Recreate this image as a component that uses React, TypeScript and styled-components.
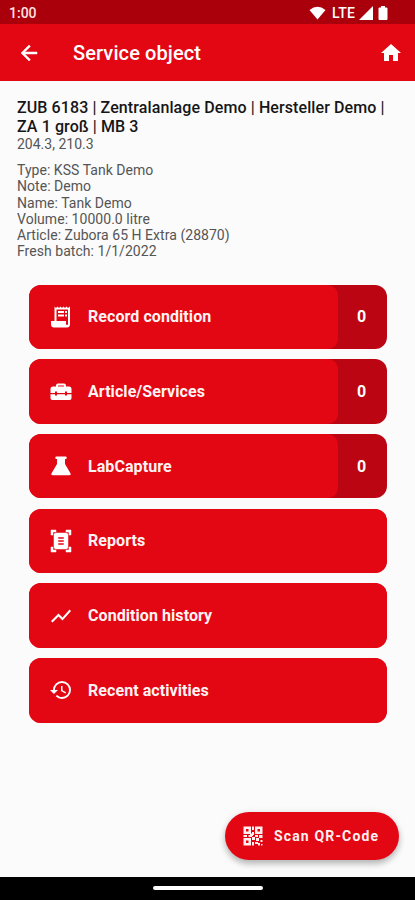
import React from "react";
import styled, { createGlobalStyle } from "styled-components";
import { MdArrowBack, MdHome, MdHistory, MdShowChart, MdDocumentScanner } from "react-icons/md";

const GlobalStyle = createGlobalStyle`
  * { box-sizing: border-box; }
  body { margin: 0; background: #fbfbfb; font-family: Roboto, sans-serif; }
`;

const Screen = styled.div`
  height: 900px;
  display: flex;
  flex-direction: column;
  background: #fbfbfb;
  overflow: hidden;
`;

const StatusBar = styled.div`
  height: 24px;
  flex: none;
  display: flex;
  align-items: center;
  justify-content: space-between;
  padding: 2px 27px 0 9px;
  background: #a9000c;
  color: #fff;
  font-size: 14px;
  font-weight: 500;
`;

const Clock = styled.span`
  color: #ffe3e2;
`;

const Signals = styled.div`
  display: flex;
  align-items: center;
  font-size: 14px;
  letter-spacing: 0.2px;
`;

const Network = styled.span`
  margin: 0 4px 0 6px;
`;

const AppBar = styled.header`
  height: 56.5px;
  flex: none;
  display: flex;
  align-items: center;
  padding: 2px 12px 0 17px;
  background: #e30613;
  color: #fff;
`;

const BoldIcon = styled.span`
  display: flex;
  svg {
    stroke: none;
  }
  path:not([fill="none"]) {
    stroke: currentColor;
    stroke-width: 0.5px;
  }
`;

const Title = styled.h1`
  flex: 1;
  margin: 0 0 0 32px;
  font-size: 20px;
  font-weight: 500;
  letter-spacing: 0.1px;
`;

const Details = styled.section`
  padding: 17px 17px 0;
  color: #555;
  font-size: 14px;
  line-height: 16.2px;
`;

const Heading = styled.h2`
  margin: 0;
  font-size: 16px;
  line-height: 19px;
  font-weight: 500;
  letter-spacing: 0.1px;
  color: #161616;
  white-space: nowrap;
`;

const Positions = styled.div`
  margin-bottom: 10.5px;
`;

const Field = styled.div`
  letter-spacing: 0.04px;
`;

const Menu = styled.nav`
  display: flex;
  flex-direction: column;
  gap: 10.2px;
  padding: 25.2px 28px 0 28.5px;
`;

const MenuButton = styled.div<{ $counted: boolean }>`
  height: 64.5px;
  display: flex;
  border-radius: 12px;
  overflow: hidden;
  background: ${(p) => (p.$counted ? "#bb0512" : "#e30613")};
  color: #fff;
`;

const MenuMain = styled.div`
  flex: 1;
  display: flex;
  align-items: center;
  gap: 15px;
  padding-left: 20.5px;
  border-radius: 0 10px 10px 0;
  background: #e30613;
`;

const MenuLabel = styled.span`
  font-size: 16px;
  font-weight: 700;
  letter-spacing: 0.07px;
  color: #fff3f2;
`;

const Count = styled.span`
  width: 49px;
  display: grid;
  place-items: center;
  padding-right: 2px;
  font-size: 16px;
  font-weight: 700;
`;

const Footer = styled.div`
  margin-top: auto;
  display: flex;
  justify-content: flex-end;
  padding: 0 16px 16.5px;
`;

const ScanButton = styled.div`
  width: 174px;
  height: 48px;
  display: flex;
  align-items: center;
  gap: 9px;
  padding-left: 16px;
  border-radius: 24px;
  background: #e30613;
  box-shadow: 0 4px 6px rgba(0, 0, 0, 0.24), 0 1px 8px rgba(0, 0, 0, 0.08);
  color: #fff0ef;
  font-size: 14px;
  font-weight: 700;
  letter-spacing: 1.15px;
  white-space: nowrap;
`;

const NavigationBar = styled.div`
  height: 23.5px;
  flex: none;
  display: grid;
  place-items: center;
  background: #000;
`;

const HomeHandle = styled.div`
  width: 110px;
  height: 4px;
  border-radius: 2px;
  background: #fff;
`;

const Glyph = styled.svg`
  flex: none;
  display: block;
  fill: currentColor;
`;

const ReceiptIcon = () => (
  <Glyph width="24" height="24" viewBox="0 0 24 24">
    <path fillRule="evenodd" d="M5.500 1.500 7 3l1.500-1.500L10 3l1.500-1.500L13 3l1.500-1.500L16 3l1.500-1.500L19 3l2-1.500V19a3 3 0 0 1-3 3.500H5A3 3 0 0 1 2 19v-3h3.500zM7.500 4.500V16H17v3a1 1 0 0 0 2 0V4.500zM9 6h6v2H9zm7 0h2v2h-2zM9 9.500h6v2H9zm7 0h2v2h-2z" />
  </Glyph>
);

const ToolboxIcon = () => (
  <Glyph width="24" height="24" viewBox="0 0 24 24">
    <path fillRule="evenodd" d="M9 3.500h6a2 2 0 0 1 2 2v1h3a2.500 2.500 0 0 1 2.500 2.500v4H18v-1.500h-2V13H8v-1.500H6V13H1.500V9A2.500 2.500 0 0 1 4 6.500h3v-1a2 2 0 0 1 2-2zm0 2v1h6v-1zM1.500 14.200H6v1.300h2v-1.300h8v1.300h2v-1.300h4.500v4a1.800 1.800 0 0 1-1.800 1.800H3.300a1.800 1.800 0 0 1-1.800-1.800z" />
  </Glyph>
);

const FlaskIcon = () => (
  <Glyph width="24" height="24" viewBox="0 0 24 24">
    <path d="M7.500 2.500h9a1.200 1.200 0 0 1 0 2.500H16v5l5.300 9c.9 1.500.3 2.200-1.200 2.200H3.900c-1.500 0-2.100-.7-1.200-2.200L8 10V5h-.5a1.200 1.200 0 0 1 0-2.500z" />
  </Glyph>
);

const QrIcon = () => (
  <Glyph width="24" height="24" viewBox="0 0 24 24">
    <path fillRule="evenodd" d="M2.500 2.500H10V10H2.500zM5 5v2.500h2.500V5zM14 2.500h7.500V10H14zM16.500 5v2.500H19V5zM2.500 14H10v7.500H2.500zM5 16.500V19h2.500v-2.500z" />
    <path d="M11 2.500h2V6h-2zM11 8h2v3h-2zM2.500 11H6v2H2.500zM7.500 11H11v2H7.500zM11 13h3v3h-3zM14 11h3v2h-3zM18 11h3.500v3H18zM15 14h3v3h-3zM11 18h2v3.500h-2zM14 18h3v2h-3zM17 19h2v2.500h-2zM19.500 16h2v2h-2zM20 20h1.500v1.500H20zM9 9.500h3V12H9z" />
  </Glyph>
);

const WifiIcon = () => (
  <Glyph width="17" height="14" viewBox="0 0 17 14">
    <path d="M.5 4Q8.500-2.500 16.500 4L8.500 13.500z" />
  </Glyph>
);

const SignalIcon = () => (
  <Glyph width="14" height="14" viewBox="0 0 14 14">
    <path d="M14 0v14H0z" />
  </Glyph>
);

const BatteryIcon = () => (
  <Glyph width="15" height="14" viewBox="0 0 15 14">
    <path d="M8 0h4v1.500h1.500q1 0 1 1V13q0 1-1 1h-7q-1 0-1-1V2.500q0-1 1-1H8z" />
  </Glyph>
);

const fields = [
  "Type: KSS Tank Demo",
  "Note: Demo",
  "Name: Tank Demo",
  "Volume: 10000.0 litre",
  "Article: Zubora 65 H Extra (28870)",
  "Fresh batch: 1/1/2022",
];

const items: { label: string; icon: React.ReactNode; count?: number }[] = [
  { label: "Record condition", icon: <ReceiptIcon />, count: 0 },
  { label: "Article/Services", icon: <ToolboxIcon />, count: 0 },
  { label: "LabCapture", icon: <FlaskIcon />, count: 0 },
  { label: "Reports", icon: <BoldIcon><MdDocumentScanner size={24} /></BoldIcon> },
  { label: "Condition history", icon: <MdShowChart size={24} /> },
  { label: "Recent activities", icon: <MdHistory size={24} /> },
];

export default function App() {
  return (
    <>
      <GlobalStyle />
      <Screen>
        <StatusBar>
          <Clock>1:00</Clock>
          <Signals>
            <WifiIcon />
            <Network>LTE</Network>
            <SignalIcon />
            <BatteryIcon />
          </Signals>
        </StatusBar>
        <AppBar>
          <BoldIcon>
            <MdArrowBack size={24} />
          </BoldIcon>
          <Title>Service object</Title>
          <MdHome size={24} />
        </AppBar>
        <Details>
          <Heading>
            ZUB 6183 | Zentralanlage Demo | Hersteller Demo |
            <br />
            ZA 1 groß | MB 3
          </Heading>
          <Positions>204.3, 210.3</Positions>
          {fields.map((text) => (
            <Field key={text}>{text}</Field>
          ))}
        </Details>
        <Menu>
          {items.map((item) => (
            <MenuButton key={item.label} $counted={item.count !== undefined}>
              <MenuMain>
                {item.icon}
                <MenuLabel>{item.label}</MenuLabel>
              </MenuMain>
              {item.count !== undefined && <Count>{item.count}</Count>}
            </MenuButton>
          ))}
        </Menu>
        <Footer>
          <ScanButton>
            <QrIcon />
            Scan QR-Code
          </ScanButton>
        </Footer>
        <NavigationBar>
          <HomeHandle />
        </NavigationBar>
      </Screen>
    </>
  );
}
